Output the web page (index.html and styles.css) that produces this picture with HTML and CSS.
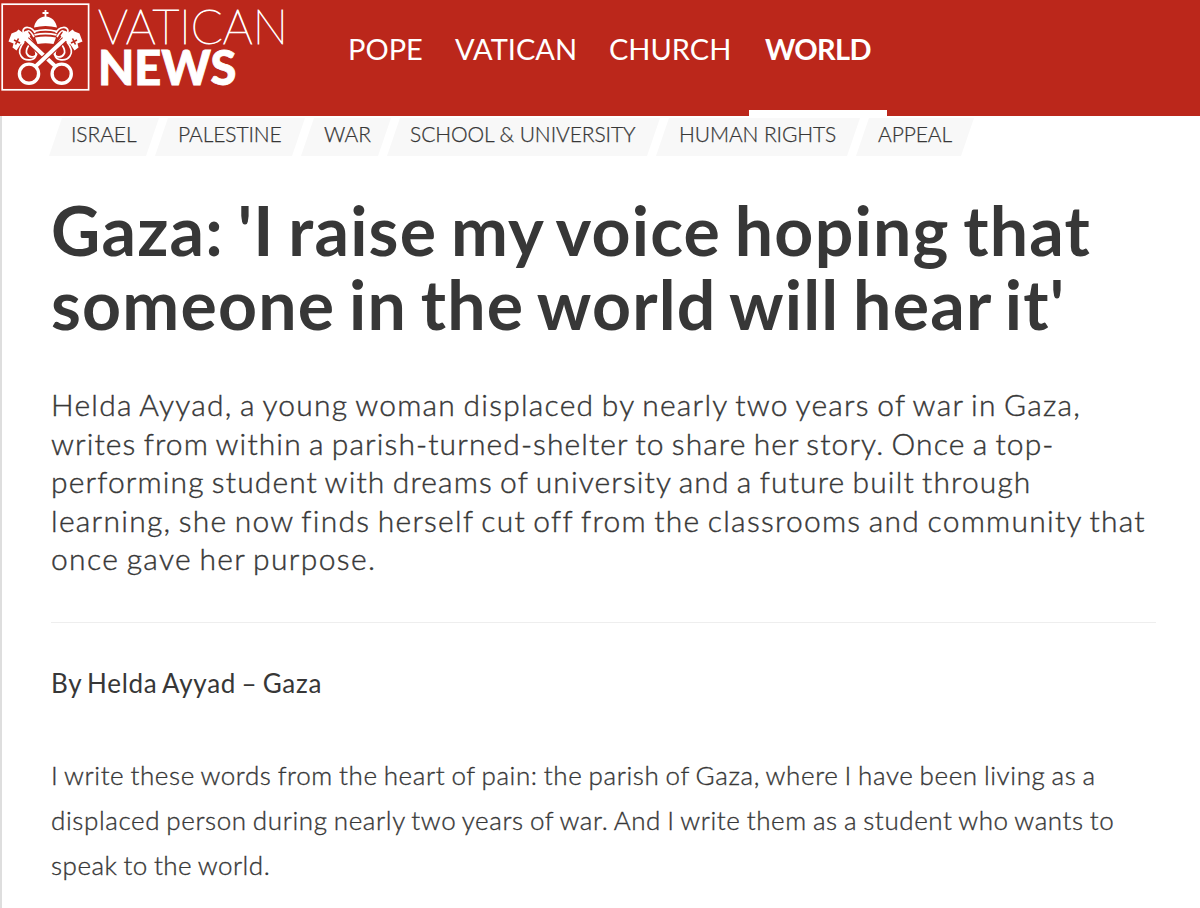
FILE: index.html
```html
<!DOCTYPE html>
<html lang="en">
<head>
    <meta charset="UTF-8">
    <meta name="viewport" content="width=device-width, initial-scale=1.0">
    <title>Gaza: 'I raise my voice hoping that someone in the world will hear it' - Vatican News</title>
    <link rel="stylesheet" href="styles.css">
</head>
<body>
    <header class="header">
        <a class="logo">
            <svg class="logo-mark" viewBox="0 0 92 94" width="92" height="94" fill="none" stroke="#fff">
                <rect x="2.2" y="4.2" width="86.4" height="85.6" stroke-width="1.7"/>
                <!-- cords -->
                <g stroke-width="1.7">
                    <path d="M35 33c-3-7-12-7-12-2 0 8 13 14 13 23 0 7-11 8-15 2-3-4-1-9 3-14"/>
                    <path d="M34 37c-5-9-8-7-6-2 2 6 10 11 9 18-1 5-8 5-10 1-2-3 0-6 2-9"/>
                    <path d="M56 33c3-7 12-7 12-2 0 8-13 14-13 23 0 7 11 8 15 2 3-4 1-9-3-14"/>
                    <path d="M57 37c5-9 8-7 6-2-2 6-10 11-9 18 1 5 8 5 10 1 2-3 0-6-2-9"/>
                </g>
                <!-- keys -->
                <g>
                    <path d="M23 36 55 66" stroke="#bb271b" stroke-width="6"/>
                    <path d="M23 36 55 66" stroke-width="3.8"/>
                    <path d="M18.500 29.500l4 3 4-2 4 5-8 8-2 1-4 6-4-3 1-4-5-2 3-8 5-2z" fill="#fff" stroke="none"/>
                    <path d="M14 40l6 3M18.500 38.500l-3 6" stroke="#bb271b" stroke-width="1.600"/>
                    <circle cx="61.700" cy="73.700" r="9.600" stroke-width="3.400"/>
                </g>
                <g>
                    <path d="M68 36 36 66" stroke="#bb271b" stroke-width="6"/>
                    <path d="M68 36 36 66" stroke-width="3.8"/>
                    <path d="M72.500 29.500l-4 3-4-2-4 5 8 8 2 1 4 6 4-3-1-4 5-2-3-8-5-2z" fill="#fff" stroke="none"/>
                    <path d="M77 40l-6 3M72.500 38.500l3 6" stroke="#bb271b" stroke-width="1.600"/>
                    <circle cx="29" cy="73.700" r="9.600" stroke-width="3.400"/>
                </g>
                <!-- tiara -->
                <path d="M45.500 10v7M42.500 13h6" stroke-width="1.800"/>
                <path d="M34 27.500c1-6 5-11 11.500-11S56 21.500 57 27.500q-11.500-3-23 0z" fill="#fff" stroke="none"/>
                <path d="M34.500 31.300q11-3 22 0M34.500 34.800q11-2.500 22 0" stroke-width="1.800"/>
                <path d="M35 37.500q10.500-2 21 0l-2.500 6.500q-8-1.500-16 0z" fill="#fff" stroke="none"/>
            </svg>
            <span class="logo-text">
                <span class="logo-vatican">VATICAN</span>
                <span class="logo-news">NEWS</span>
            </span>
        </a>
        <nav class="nav">
            <a>POPE</a>
            <a>VATICAN</a>
            <a>CHURCH</a>
            <a class="active">WORLD</a>
        </nav>
    </header>

    <main class="article">
        <div class="tags">
            <a class="tag">ISRAEL</a>
            <a class="tag">PALESTINE</a>
            <a class="tag">WAR</a>
            <a class="tag">SCHOOL &amp; UNIVERSITY</a>
            <a class="tag">HUMAN RIGHTS</a>
            <a class="tag">APPEAL</a>
        </div>

        <h1>
            <span class="line t1">Gaza: 'I raise my voice hoping that</span>
            <span class="line t2">someone in the world will hear it'</span>
        </h1>

        <p class="intro">
            <span class="line i1">Helda Ayyad, a young woman displaced by nearly two years of war in Gaza,</span>
            <span class="line i2">writes from within a parish-turned-shelter to share her story. Once a top-</span>
            <span class="line i3">performing student with dreams of university and a future built through</span>
            <span class="line i4">learning, she now finds herself cut off from the classrooms and community that</span>
            <span class="line i5">once gave her purpose.</span>
        </p>

        <p class="byline">By Helda Ayyad – Gaza</p>

        <p class="text">
            <span class="line b1">I write these words from the heart of pain: the parish of Gaza, where I have been living as a</span>
            <span class="line b2">displaced person during nearly two years of war. And I write them as a student who wants to</span>
            <span class="line b3">speak to the world.</span>
        </p>
    </main>
</body>
</html>
```
FILE: styles.css
```css
* {
    box-sizing: border-box;
}

body {
    margin: 0;
    height: 908px;
    overflow: hidden;
    font-family: Lato, "Open Sans", sans-serif;
    color: #373737;
    background-color: #fff;
}

.header {
    display: flex;
    height: 116px;
    background-color: #bb271b;
    color: #fff;
}

.logo {
    display: flex;
    width: 332px;
}

.logo-mark {
    flex: none;
}

.logo-text {
    padding: 6px 0 0 6px;
}

.logo-text span {
    display: block;
    height: 41px;
    line-height: 41px;
    white-space: nowrap;
}

.logo-vatican {
    font-size: 47px;
    font-weight: 100;
    -webkit-text-stroke: 0.9px #fff;
}

.logo-news {
    font-size: 47px;
    font-weight: 900;
    -webkit-text-stroke: 0.8px #fff;
}

.nav {
    display: grid;
    grid-template-columns: 107px 154px 156px 138px;
}

.nav a {
    height: 116px;
    padding-left: 16px;
    font-size: 29px;
    line-height: 98px;
    white-space: nowrap;
}

.nav .active {
    border-bottom: 6px solid #fff;
    font-weight: 700;
    letter-spacing: -0.7px;
}

.article {
    height: 792px;
    padding: 2px 44px 0 49px;
    border-left: 2px solid #dedede;
}

.tags {
    display: grid;
    grid-template-columns: 106px 146px 86px 269px 200px 114px;
    margin-left: -2px;
    height: 38px;
}

.tag {
    margin-right: -4px;
    padding-left: 23px;
    background-color: #f8f8f8;
    clip-path: polygon(13px 0, 100% 0, calc(100% - 13px) 100%, 0 100%);
    font-size: 21px;
    font-weight: 300;
    letter-spacing: -0.1px;
    line-height: 32px;
    white-space: nowrap;
    -webkit-text-stroke: 0.25px #373737;
}

.tag:first-child,
.tag:last-child {
    padding-left: 22px;
}

.line {
    display: block;
    white-space: nowrap;
}

h1 {
    margin: 37px 0 0;
    font-size: 68px;
    font-weight: 700;
    line-height: 74px;
    word-spacing: -4px;
}

.t1 {
    letter-spacing: 1.19px;
}

.t2 {
    letter-spacing: 1.2px;
}

.intro {
    margin: 44px 0 0;
    padding-bottom: 44px;
    border-bottom: 1px solid #eee;
    font-size: 30px;
    font-weight: 300;
    line-height: 38.6px;
    word-spacing: -2px;
    -webkit-text-stroke: 0.4px #373737;
}

.i1 {
    letter-spacing: 1.25px;
}

.i2 {
    letter-spacing: 1.1px;
}

.i3 {
    letter-spacing: 1.12px;
}

.i4 {
    letter-spacing: 1.26px;
}

.i5 {
    letter-spacing: 1.35px;
}

.byline {
    margin: 38px 0 0;
    font-size: 26px;
    line-height: 45px;
    letter-spacing: 0.72px;
    word-spacing: -2px;
}

.text {
    margin: 47px 0 0;
    font-size: 26px;
    font-weight: 300;
    line-height: 45.2px;
    word-spacing: -1.5px;
    -webkit-text-stroke: 0.35px #373737;
}

.b1 {
    letter-spacing: 0.6px;
}

.b2 {
    letter-spacing: 0.6px;
}

.b3 {
    letter-spacing: 0.5px;
}
```
